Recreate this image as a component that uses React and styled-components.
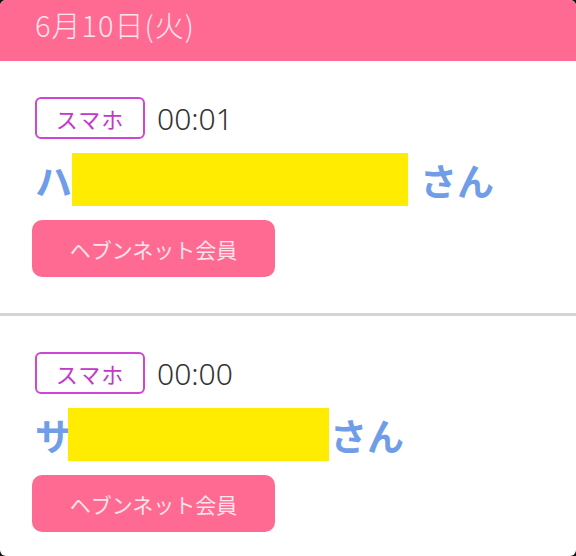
import React from 'react'
import styled, { createGlobalStyle } from 'styled-components'

const Global = createGlobalStyle`
  html, body {
    margin: 0;
    padding: 0;
    background: #111;
  }
  body {
    font-family: "Noto Sans CJK JP", "Noto Sans", sans-serif;
  }
`

const Screen = styled.div`
  width: 576px;
  height: 556px;
  overflow: hidden;
  background: #fff;
  border-radius: 6px;
`

const DateBar = styled.div`
  height: 61px;
  background: #ff6a93;
  color: #fde4ec;
  font-size: 29px;
  font-weight: 300;
  letter-spacing: 1px;
  display: flex;
  align-items: center;
  padding: 0 35px 14px;
  box-sizing: border-box;
`

const Entry = styled.div`
  display: flex;
  flex-direction: column;
  align-items: flex-start;
  gap: 14px;
  padding: 36px 35px 36px;
  border-bottom: ${p => (p.$last ? 'none' : '3px solid #d4d4d4')};
`

const Meta = styled.div`
  display: flex;
  align-items: center;
  gap: 12px;
  height: 42px;
`

const Device = styled.span`
  box-sizing: border-box;
  width: 110px;
  height: 42px;
  border: 2px solid #cf45d6;
  border-radius: 6px;
  color: #c338c9;
  font-size: 22px;
  display: flex;
  align-items: center;
  justify-content: center;
  letter-spacing: 1px;
`

const Time = styled.span`
  font-family: "Noto Sans", sans-serif;
  font-size: 30px;
  font-weight: 300;
  color: #333;
`

const Name = styled.div`
  display: flex;
  align-items: center;
  height: 53px;
  color: #6f9de8;
  font-weight: bold;
  font-size: 37px;
`

const Mask = styled.span`
  display: block;
  width: ${p => p.$w}px;
  height: 53px;
  background: #ffec00;
  margin: 0 ${p => p.$gap}px 0 ${p => p.$lead}px;
`

const Member = styled.div`
  width: 243px;
  height: 57px;
  margin-left: -3px;
  border-radius: 10px;
  background: #ff6a93;
  color: #fde4ec;
  font-size: 21px;
  display: flex;
  align-items: center;
  justify-content: center;
`

const visits = [
  { initial: 'ハ', time: '00:01', w: 336, lead: 0, gap: 12 },
  { initial: 'サ', time: '00:00', w: 261, lead: -4, gap: 1 },
]

export default function App() {
  return (
    <Screen>
      <Global />
      <DateBar>6月10日(火)</DateBar>
      {visits.map((v, i) => (
        <Entry key={i} $last={i === visits.length - 1}>
          <Meta>
            <Device>スマホ</Device>
            <Time>{v.time}</Time>
          </Meta>
          <Name>
            {v.initial}
            <Mask $w={v.w} $lead={v.lead} $gap={v.gap} />
            さん
          </Name>
          <Member>ヘブンネット会員</Member>
        </Entry>
      ))}
    </Screen>
  )
}
